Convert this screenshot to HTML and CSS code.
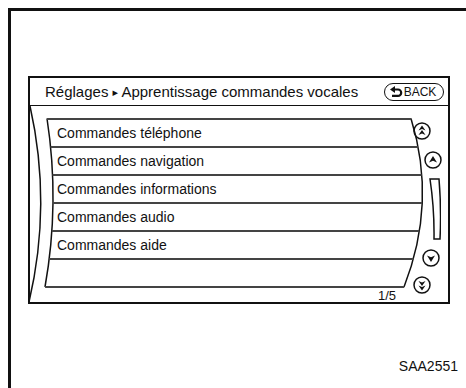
FILE: index.html
```html
<!DOCTYPE html>
<html lang="fr">
<head>
    <meta charset="UTF-8">
    <title>Réglages</title>
    <link rel="stylesheet" href="styles.css">
</head>
<body>
<div class="frame">
    <div class="screen">
        <div class="header">
            <span class="title">Réglages <span class="sep">▸</span> Apprentissage commandes vocales</span>
            <span class="back">
                <svg width="13" height="12" viewBox="0 0 13 12"><path d="M0 3.5 L5 0 L5 7 Z" fill="#111"/><path d="M4 3.5 H8 A3.2 3.2 0 0 1 8 9.9 H2" fill="none" stroke="#111" stroke-width="2.2"/></svg>BACK
            </span>
        </div>
        <div class="body">
            <!-- lignes courbes du cadre -->
            <svg class="arcs" width="418" height="196" viewBox="0 0 418 196">
                <path d="M0 0 Q22 98 -1 196" fill="none" stroke="#111" stroke-width="1.5"/>
                <path d="M17 12.5 Q30 96.5 15 181" fill="none" stroke="#111" stroke-width="1.5"/>
                <path d="M381 12.5 Q407 96.5 374 181" fill="none" stroke="#111" stroke-width="1.5"/>
            </svg>
            <div class="gutter"></div>
            <div class="main">
                <ul class="list">
                    <li>Commandes téléphone</li>
                    <li>Commandes navigation</li>
                    <li>Commandes informations</li>
                    <li>Commandes audio</li>
                    <li>Commandes aide</li>
                    <li></li>
                </ul>
                <div class="pager">1/5</div>
            </div>
            <div class="side">
                <span class="btn btn-top"><svg width="18" height="18" viewBox="0 0 18 18"><circle cx="9" cy="9" r="8" fill="#fff" stroke="#111" stroke-width="1.5"/><path d="M9 3.5 L12.5 8.5 L9 7 L5.5 8.5 Z M9 8 L12.5 13 L9 11.5 L5.5 13 Z" fill="#111"/></svg></span>
                <span class="btn btn-up"><svg width="18" height="18" viewBox="0 0 18 18"><circle cx="9" cy="9" r="8" fill="#fff" stroke="#111" stroke-width="1.5"/><path d="M9 5 L13 11.5 L9 9.8 L5 11.5 Z" fill="#111"/></svg></span>
                <span class="bar"><svg width="12" height="62" viewBox="0 0 12 62"><path d="M1 1 H10 Q12.5 31 11 61 H5 Q5.5 31 1 1 Z" fill="#fff" stroke="#111" stroke-width="1.5"/></svg></span>
                <span class="btn btn-down"><svg width="18" height="18" viewBox="0 0 18 18"><circle cx="9" cy="9" r="8" fill="#fff" stroke="#111" stroke-width="1.5"/><path d="M9 13 L13 6.5 L9 8.2 L5 6.5 Z" fill="#111"/></svg></span>
                <span class="btn btn-bottom"><svg width="18" height="18" viewBox="0 0 18 18"><circle cx="9" cy="9" r="8" fill="#fff" stroke="#111" stroke-width="1.5"/><path d="M9 14.5 L12.5 9.5 L9 11 L5.5 9.5 Z M9 10 L12.5 5 L9 6.5 L5.5 5 Z" fill="#111"/></svg></span>
            </div>
        </div>
    </div>
    <div class="code">SAA2551</div>
</div>
</body>
</html>
```

FILE: styles.css
```css
*{
    margin:0;
    padding:0;
    box-sizing:border-box;
}
html,body{
    background:#fff;
    overflow:hidden;
}
body{
    margin:8px 0 0 8px;
    font-family:"Liberation Sans",Arial,sans-serif;
    color:#111;
}
.frame{
    width:458px;
    height:380px;
    border-top:3px solid #111;
    border-left:3px solid #111;
    padding:65px 0 0 17px;
}
.screen{
    width:422px;
    height:228px;
    border:2px solid #111;
}
.header{
    height:28px;
    border-bottom:1px solid #111;
    display:flex;
    align-items:center;
    justify-content:space-between;
    padding:0 4px 0 15px;
}
.title{
    font-size:15px;
    white-space:nowrap;
}
.sep{
    font-size:11px;
    font-family:"DejaVu Sans",sans-serif;
    position:relative;
    top:-1px;
}
.back{
    width:60px;
    height:18px;
    border:1.5px solid #111;
    border-radius:9px;
    display:flex;
    align-items:center;
    justify-content:center;
    gap:1px;
    font-size:12px;
    padding-right:2px;
}
.body{
    height:196px;
    display:flex;
    position:relative;
}
.arcs{
    position:absolute;
    left:0;
    top:0;
    overflow:visible;
    pointer-events:none;
}
.gutter{
    width:15px;
    flex:none;
}
.main{
    width:378px;
    margin-right:-14px;
    flex:none;
    display:flex;
    flex-direction:column;
}
.list{
    list-style:none;
    margin-top:12px;
    height:170px;
    border-top:2px solid #444;
    clip-path:path('M2 0 L366 0 Q392 85 359 170 L0 170 Q15 85 2 0 Z');
}
.list li{
    height:28px;
    line-height:26px;
    border-bottom:2px solid #444;
    padding-left:12px;
    font-size:14px;
    white-space:nowrap;
}
.pager{
    font-size:13px;
    line-height:15px;
    text-align:right;
    padding-right:27px;
}
.side{
    width:39px;
    flex:none;
    display:flex;
    flex-direction:column;
    align-items:flex-start;
    padding-top:16px;
}
.btn,.bar{
    display:block;
    line-height:0;
}
.btn-top{
    margin-left:4px;
}
.btn-up{
    margin:11px 0 0 15px;
}
.bar{
    margin:9px 0 0 20px;
}
.btn-down{
    margin:9px 0 0 13px;
}
.btn-bottom{
    margin:9px 0 0 4px;
}
.code{
    width:430px;
    margin-top:54px;
    text-align:right;
    font-size:14px;
    line-height:16px;
}
```
